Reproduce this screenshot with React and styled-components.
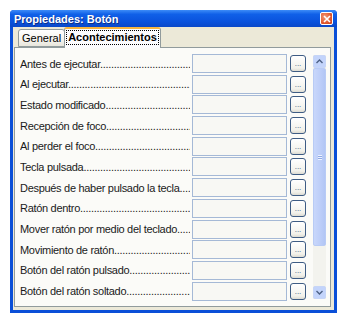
import React from "react";
import styled, { createGlobalStyle } from "styled-components";

const Global = createGlobalStyle`
  html, body { margin: 0; padding: 0; background: #ffffff; }
  body { font-family: "Liberation Sans", Arial, sans-serif; }
`;

const Window = styled.div`
  margin: 10px 0 0 10px;
  width: 327px;
  height: 303px;
  box-sizing: border-box;
  background: #0a4fd8;
  border-radius: 4px 4px 0 0;
  display: flex;
  flex-direction: column;
  padding: 0 3px 3px 3px;
`;

const TitleBar = styled.div`
  height: 17px;
  margin: 0 -3px;
  padding: 0 4px 0 4px;
  border-radius: 4px 4px 0 0;
  background: linear-gradient(180deg, #3d8cf7 0%, #1060e8 25%, #0a52dc 70%, #0a48c8 100%);
  display: flex;
  align-items: center;
  justify-content: space-between;
`;

const Title = styled.span`
  color: #ffffff;
  font-weight: bold;
  font-size: 11px;
  text-shadow: 1px 1px 0 #0b2f8a;
`;

const Close = styled.div`
  width: 13px;
  height: 13px;
  box-sizing: border-box;
  border: 1px solid #ffffff;
  border-radius: 2px;
  background: radial-gradient(circle at 35% 35%, #f19a78 0%, #e2592f 60%, #c8401c 100%);
  display: flex;
  align-items: center;
  justify-content: center;
`;

const Body = styled.div`
  flex: 1;
  background: #ece9d8;
  padding: 1px 3px 3px 1px;
  display: flex;
  flex-direction: column;
`;

const TabStrip = styled.div`
  display: flex;
  align-items: flex-end;
  height: 19px;
  padding-left: 4px;
  position: relative;
  z-index: 1;
`;

const Tab = styled.div`
  box-sizing: border-box;
  height: ${(p) => (p.$active ? "21px" : "18px")};
  margin-bottom: ${(p) => (p.$active ? "-1px" : "0")};
  padding: ${(p) => (p.$active ? "2px 2px 0 2px" : "2px 3px 0 3px")};
  border: 1px solid #919b9c;
  border-bottom: ${(p) => (p.$active ? "none" : "1px solid #919b9c")};
  border-top: ${(p) => (p.$active ? "2px solid #f8b640" : "1px solid #919b9c")};
  border-radius: 3px 3px 0 0;
  background: ${(p) =>
    p.$active ? "#fcfcfe" : "linear-gradient(180deg, #ffffff 0%, #f4f3ee 60%, #e8e6dc 100%)"};
  font-size: 11px;
  font-weight: ${(p) => (p.$active ? "bold" : "normal")};
  color: #000;
  white-space: nowrap;
  margin-left: ${(p) => (p.$active ? "-1px" : "0")};
`;

const Focus = styled.span`
  display: inline-block;
  outline: 1px dotted #000;
  outline-offset: 0;
  line-height: 13px;
  padding: 0 1px;
`;

const Panel = styled.div`
  flex: 1;
  box-sizing: border-box;
  border: 1px solid #919b9c;
  background: #fbfbf8;
  padding: 6px 4px 3px 5px;
  display: flex;
  gap: 5px;
`;

const List = styled.div`
  flex: 1;
  display: flex;
  flex-direction: column;
  gap: 1.7px;
`;

const Row = styled.div`
  display: flex;
  align-items: center;
  height: 19px;
`;

const Label = styled.div`
  width: 170px;
  margin-right: 2px;
  font-size: 11px;
  letter-spacing: -0.3px;
  color: #1a1a1a;
  white-space: nowrap;
  overflow: hidden;
`;

const Field = styled.div`
  width: 95px;
  height: 19px;
  box-sizing: border-box;
  border: 1px solid #a5b9d6;
  background: #f8f8f4;
  margin-right: 3px;
`;

const Dots = styled.div`
  width: 16px;
  height: 17px;
  box-sizing: border-box;
  border: 1px solid #3e5c84;
  border-radius: 3px;
  background: linear-gradient(180deg, #ffffff 0%, #f2f1ea 80%, #dcdbd2 100%);
  font-size: 8px;
  line-height: 8px;
  font-weight: normal;
  letter-spacing: 0;
  color: #3a5080;
  display: flex;
  align-items: flex-end;
  justify-content: center;
  padding: 0 0 3px 0;
  overflow: hidden;
`;

const Scroll = styled.div`
  width: 13px;
  margin-top: 1px;
  margin-bottom: 4px;
  display: flex;
  flex-direction: column;
  background: #f1f0ea;
`;

const Arrow = styled.div`
  height: 13px;
  box-sizing: border-box;
  border: 1px solid #c6d5f7;
  border-radius: 2px;
  background: #c3d4fb;
  display: flex;
  align-items: center;
  justify-content: center;
`;

const Thumb = styled.div`
  height: 178px;
  box-sizing: border-box;
  border: 1px solid #b8cbf5;
  border-radius: 2px;
  background: linear-gradient(90deg, #c8d7fb 0%, #bccdf8 60%, #b2c6f5 100%);
  display: flex;
  align-items: center;
  justify-content: center;
`;

const Track = styled.div`
  flex: 1;
  background: #f3f3ee;
`;

const Grip = styled.div`
  width: 4px;
  height: 5px;
  background: repeating-linear-gradient(180deg, #eef3ff 0 1px, #8ea8e4 1px 2px);
`;

const events = [
  "Antes de ejecutar",
  "Al ejecutar",
  "Estado modificado",
  "Recepción de foco",
  "Al perder el foco",
  "Tecla pulsada",
  "Después de haber pulsado la tecla",
  "Ratón dentro",
  "Mover ratón por medio del teclado",
  "Movimiento de ratón",
  "Botón del ratón pulsado",
  "Botón del ratón soltado",
];

const leader = ".".repeat(80);

export default function App() {
  return (
    <>
      <Global />
      <Window>
        <TitleBar>
          <Title>Propiedades: Botón</Title>
          <Close>
            <svg width="8" height="8" viewBox="0 0 8 8">
              <path d="M1 1 L7 7 M7 1 L1 7" stroke="#fff" strokeWidth="1.6" />
            </svg>
          </Close>
        </TitleBar>
        <Body>
          <TabStrip>
            <Tab>General</Tab>
            <Tab $active>
              <Focus>Acontecimientos</Focus>
            </Tab>
          </TabStrip>
          <Panel>
            <List>
              {events.map((e) => (
                <Row key={e}>
                  <Label>
                    {e}
                    {leader}
                  </Label>
                  <Field />
                  <Dots>...</Dots>
                </Row>
              ))}
            </List>
            <Scroll>
              <Arrow>
                <svg width="7" height="5" viewBox="0 0 7 5">
                  <path d="M0.5 4 L3.5 1 L6.5 4" stroke="#4d6185" strokeWidth="1.4" fill="none" />
                </svg>
              </Arrow>
              <Thumb>
                <Grip />
              </Thumb>
              <Track />
              <Arrow>
                <svg width="7" height="5" viewBox="0 0 7 5">
                  <path d="M0.5 1 L3.5 4 L6.5 1" stroke="#4d6185" strokeWidth="1.4" fill="none" />
                </svg>
              </Arrow>
            </Scroll>
          </Panel>
        </Body>
      </Window>
    </>
  );
}
